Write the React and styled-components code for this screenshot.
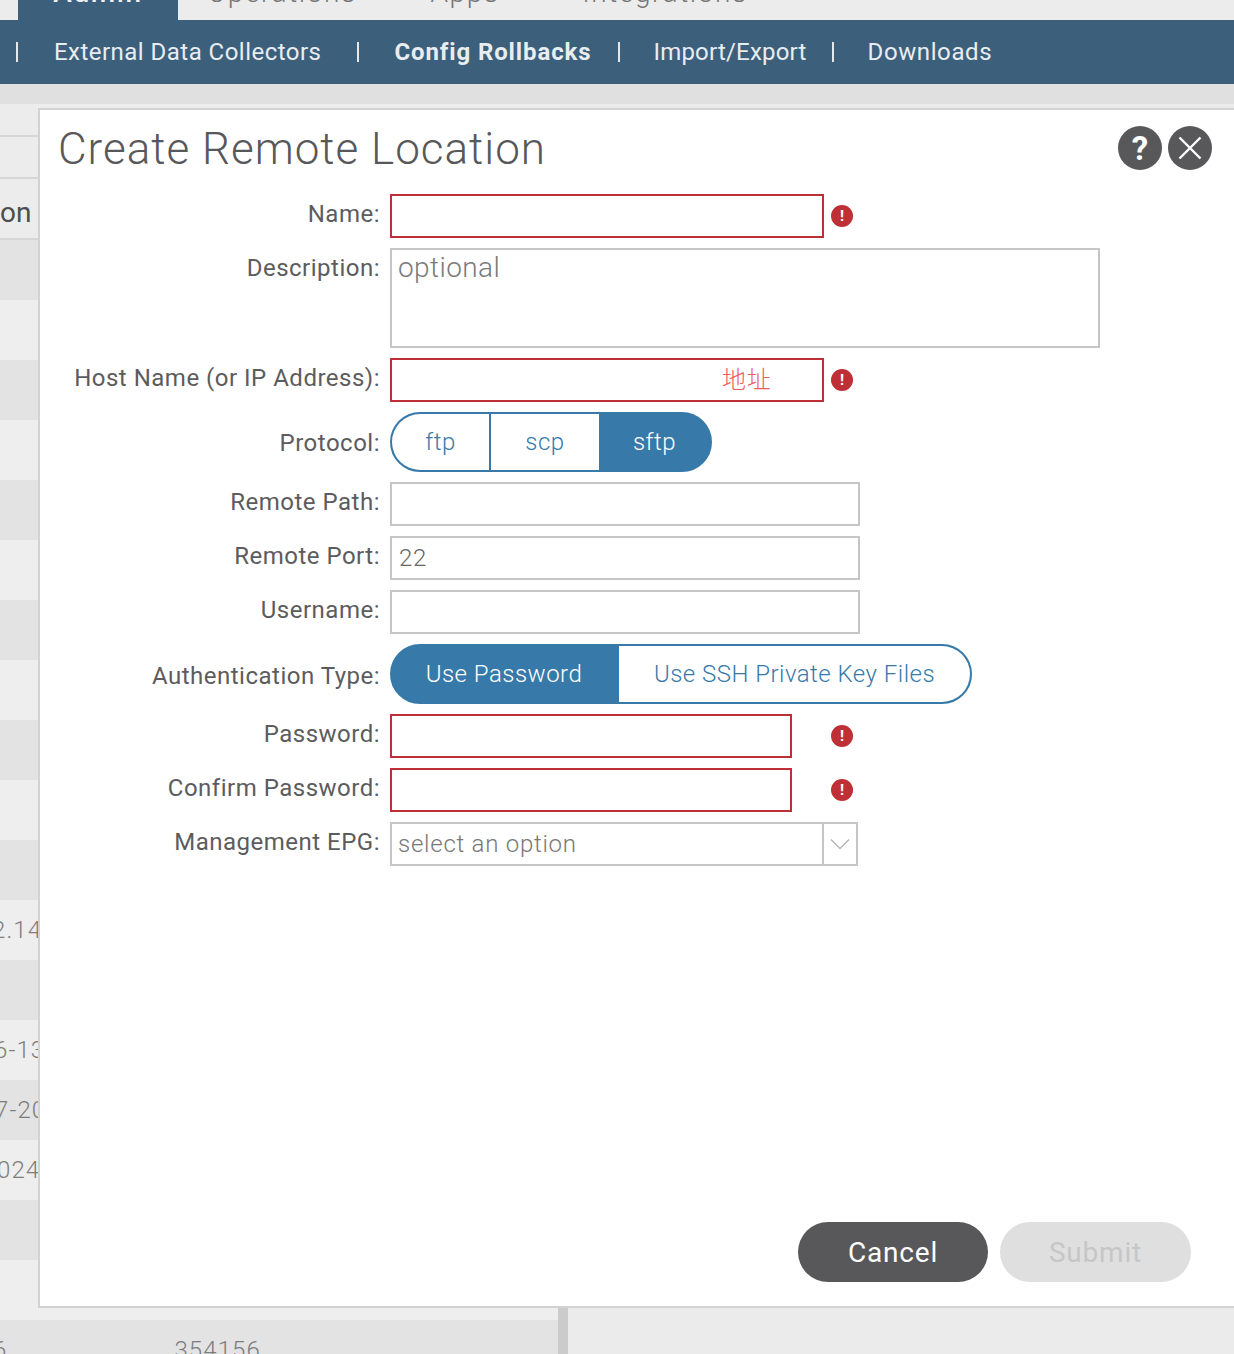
import React from "react";
import styled, { createGlobalStyle } from "styled-components";

const Global = createGlobalStyle`
  html, body { margin: 0; padding: 0; background: #ebebeb; }
  * { box-sizing: border-box; }
  body { font-family: Roboto, "Noto Sans CJK SC", sans-serif; }
`;

const Page = styled.div`
  position: relative;
  width: 1234px;
  height: 1354px;
  overflow: hidden;
  background: #ebebeb;
`;

const TabBar = styled.div`
  height: 20px;
  display: flex;
  align-items: flex-end;
  padding-left: 18px;
  background: #ececec;
  overflow: hidden;
`;
const Tab = styled.div`
  height: 20px;
  width: ${(p) => p.$w}px;
  flex: none;
  display: flex;
  align-items: flex-end;
  justify-content: center;
  background: ${(p) => (p.$active ? "#3c5f7c" : "transparent")};
  color: ${(p) => (p.$active ? "#f0f0f0" : "#757575")};
  font-size: 28px;
  font-weight: ${(p) => (p.$active ? 500 : 300)};
  letter-spacing: 1.6px;
  line-height: 28px;
  white-space: nowrap;
  & > span { display: block; margin-bottom: 13px; }
`;

const Nav = styled.nav`
  height: 64px;
  background: #3c5f7c;
  display: flex;
  align-items: center;
  padding-left: 16px;
  color: #e8edf0;
  font-size: 24px;
`;
const Sep = styled.i`
  display: block;
  width: 2px;
  height: 20px;
  background: #e4e9ed;
  flex: none;
  margin-right: ${(p) => p.$r}px;
`;
const NavItem = styled.a`
  font-weight: ${(p) => (p.$active ? 700 : 400)};
  letter-spacing: ${(p) => p.$ls}px;
  margin-right: ${(p) => p.$r}px;
  white-space: nowrap;
`;

const Band = styled.div`
  height: 20px;
  background: #e0e0e0;
`;

const Body = styled.div`
  display: flex;
  align-items: flex-start;
`;
const Table = styled.div`
  width: 558px;
  flex: none;
  padding-top: 31px;
  background: #ececec;
`;
const Scrollbar = styled.div`
  width: 10px;
  height: 1250px;
  margin-top: 4px;
  flex: none;
  background: #cbcbcb;
`;
const HeadRow = styled.div`
  height: ${(p) => p.$h}px;
  border-top: 2px solid #d6d6d6;
  background: #ececec;
  display: flex;
  align-items: center;
  padding-top: ${(p) => p.$pt || 0}px;
  color: #4d4d4d;
  font-size: 28px;
  font-weight: 400;
`;
const Row = styled.div`
  height: 60px;
  display: flex;
  align-items: center;
  background: ${(p) => (p.$dark ? "#e3e3e3" : "#eeeeee")};
  color: #7d7d7d;
  font-size: 24px;
  font-weight: 300;
  letter-spacing: 1.1px;
  white-space: nowrap;
  overflow: hidden;
`;
const Cell = styled.span`
  display: block;
  flex: none;
  margin-left: ${(p) => p.$x}px;
`;

const Modal = styled.section`
  position: absolute;
  left: 38px;
  top: 108px;
  width: 1240px;
  height: 1200px;
  background: #fff;
  border: 2px solid #d2d2d2;
  display: flex;
  flex-direction: column;
`;
const ModalHead = styled.header`
  display: flex;
  align-items: center;
  height: 76px;
  padding: 0 0 0 18px;
`;
const Title = styled.h1`
  margin: 0;
  padding-top: 2px;
  flex: none;
  width: 1060px;
  color: #58585a;
  font-size: 44px;
  font-weight: 300;
  line-height: 1;
  letter-spacing: 1px;
`;
const RoundBtn = styled.button`
  width: 44px;
  height: 44px;
  padding: 0;
  margin-right: 6px;
  border: 0;
  border-radius: 50%;
  flex: none;
  background: #58585a;
  color: #fff;
  font: 700 33px/1 Roboto, sans-serif;
  display: flex;
  align-items: center;
  justify-content: center;
`;

const Form = styled.form`
  display: flex;
  flex-direction: column;
  gap: 10px;
  padding-top: 8px;
  margin: 0;
`;
const FormRow = styled.div`
  display: flex;
  align-items: flex-start;
  gap: 10px;
`;
const Label = styled.label`
  width: 340px;
  flex: none;
  text-align: right;
  color: #5c5c5e;
  font-size: 24px;
  letter-spacing: 0.5px;
  line-height: 40px;
  padding-top: ${(p) => p.$pad || 0}px;
  white-space: nowrap;
`;
const Input = styled.input`
  display: block;
  width: ${(p) => p.$w}px;
  height: 44px;
  flex: none;
  padding: 0 0 0 ${(p) => p.$pl || 7}px;
  border: 2px solid ${(p) => (p.$error ? "#be3035" : "#c6c6c9")};
  border-radius: 0;
  outline: none;
  background: #fff;
  color: #666;
  font: 300 24px Roboto, "Noto Sans CJK SC", sans-serif;
  letter-spacing: 0.8px;
  &::placeholder { color: #ee5c5c; opacity: 1; }
`;
const Area = styled.textarea`
  display: block;
  width: 710px;
  height: 100px;
  flex: none;
  padding: 2px 6px 0;
  border: 2px solid #c6c6c9;
  border-radius: 0;
  outline: none;
  resize: none;
  font: 300 28px/32px Roboto, sans-serif;
  letter-spacing: 0.4px;
  &::placeholder { color: #7a7a7a; opacity: 1; }
`;
const ErrorIcon = styled.span`
  width: 22px;
  height: 22px;
  flex: none;
  margin-top: 11px;
  margin-left: ${(p) => p.$ml}px;
  border-radius: 50%;
  background: #be3035;
  color: #fff;
  display: flex;
  align-items: center;
  justify-content: center;
  font: 700 15px/1 Roboto, sans-serif;
`;
const Segmented = styled.div`
  display: flex;
  height: 60px;
  width: ${(p) => p.$w}px;
  flex: none;
  border: 2px solid #377aa9;
  border-radius: 30px;
  background: #377aa9;
  overflow: hidden;
`;
const Segment = styled.button`
  width: ${(p) => p.$w}px;
  flex: ${(p) => (p.$w ? "none" : "1")};
  padding: 0 ${(p) => p.$pr || 0}px 0 0;
  border: 0;
  border-right: ${(p) => (p.$divider ? "2px solid #377aa9" : "0")};
  background: ${(p) => (p.$on ? "#377aa9" : "#fff")};
  color: ${(p) => (p.$on ? "#fff" : "#377aa9")};
  font: 300 24px Roboto, sans-serif;
  letter-spacing: 0.48px;
`;
const Select = styled.div`
  width: 468px;
  height: 44px;
  flex: none;
  display: flex;
  align-items: center;
  border: 2px solid #c6c6c9;
  color: #777;
  font-size: 24px;
  font-weight: 300;
  letter-spacing: 0.75px;
`;
const SelectText = styled.span`
  flex: 1;
  padding-left: 6px;
`;
const SelectArrow = styled.span`
  width: 34px;
  height: 100%;
  flex: none;
  border-left: 2px solid #c6c6c9;
  display: flex;
  align-items: center;
  justify-content: center;
`;
const Footer = styled.footer`
  margin-top: auto;
  display: flex;
  gap: 12px;
  padding: 0 0 24px 758px;
`;
const ActionBtn = styled.button`
  width: ${(p) => p.$w}px;
  height: 60px;
  padding: 0;
  border: 0;
  border-radius: 30px;
  background: ${(p) => (p.$off ? "#dfdfdf" : "#58585a")};
  color: ${(p) => (p.$off ? "#c6c6c6" : "#fff")};
  font: 400 28px Roboto, sans-serif;
  letter-spacing: 0.8px;
`;

const rowTexts = {
  11: ["2.14", -8],
  13: ["6-13", -6],
  14: ["7-20", -5],
  15: ["024", -3],
};

const Err = ({ ml }) => <ErrorIcon $ml={ml}>!</ErrorIcon>;

export default function App() {
  return (
    <Page>
      <Global />
      <TabBar>
        <Tab $w={160} $active><span>Admin</span></Tab>
        <Tab $w={208}><span>Operations</span></Tab>
        <Tab $w={158}><span>Apps</span></Tab>
        <Tab $w={242}><span>Integrations</span></Tab>
      </TabBar>
      <Nav>
        <Sep $r={36} />
        <NavItem $r={36} $ls={0.47}>External Data Collectors</NavItem>
        <Sep $r={35} />
        <NavItem $r={27} $ls={0.88} $active>Config Rollbacks</NavItem>
        <Sep $r={33} />
        <NavItem $r={25} $ls={0.2}>Import/Export</NavItem>
        <Sep $r={34} />
        <NavItem $r={0} $ls={0.6}>Downloads</NavItem>
      </Nav>
      <Band />
      <Body>
        <Table>
          <HeadRow $h={42} />
          <HeadRow $h={61} $pt={8}><Cell $x={0}>on</Cell></HeadRow>
          <HeadRow $h={2} />
          {Array.from({ length: 18 }, (_, i) => (
            <Row key={i} $dark={i % 2 === 0}>
              {rowTexts[i] ? <Cell $x={rowTexts[i][1]}>{rowTexts[i][0]}</Cell> : null}
            </Row>
          ))}
          <Row $dark>
            <Cell $x={-7}>6</Cell>
            <Cell $x={167}>354156</Cell>
          </Row>
        </Table>
        <Scrollbar />
      </Body>
      <Modal>
        <ModalHead>
          <Title>Create Remote Location</Title>
          <RoundBtn aria-label="help">?</RoundBtn>
          <RoundBtn aria-label="close">
            <svg width="26" height="26" viewBox="0 0 26 26" fill="none" stroke="#fff" strokeWidth="2.4">
              <path d="M2.5 2.5 23.5 23.5M23.5 2.5 2.5 23.5" />
            </svg>
          </RoundBtn>
        </ModalHead>
        <Form>
          <FormRow>
            <Label>Name:</Label>
            <Input $w={434} $error />
            <Err ml={-3} />
          </FormRow>
          <FormRow>
            <Label>Description:</Label>
            <Area placeholder="optional" />
          </FormRow>
          <FormRow>
            <Label>Host Name (or IP Address):</Label>
            <Input $w={434} $error $pl={330} placeholder="地址" />
            <Err ml={-3} />
          </FormRow>
          <FormRow>
            <Label $pad={11}>Protocol:</Label>
            <Segmented $w={322}>
              <Segment $w={99} $divider>ftp</Segment>
              <Segment $w={108}>scp</Segment>
              <Segment $on>sftp</Segment>
            </Segmented>
          </FormRow>
          <FormRow>
            <Label>Remote Path:</Label>
            <Input $w={470} />
          </FormRow>
          <FormRow>
            <Label>Remote Port:</Label>
            <Input $w={470} defaultValue="22" />
          </FormRow>
          <FormRow>
            <Label>Username:</Label>
            <Input $w={470} />
          </FormRow>
          <FormRow>
            <Label $pad={12}>Authentication Type:</Label>
            <Segmented $w={582}>
              <Segment $w={227} $pr={3} $on>Use Password</Segment>
              <Segment>Use SSH Private Key Files</Segment>
            </Segmented>
          </FormRow>
          <FormRow>
            <Label>Password:</Label>
            <Input $w={402} $error />
            <Err ml={29} />
          </FormRow>
          <FormRow>
            <Label>Confirm Password:</Label>
            <Input $w={402} $error />
            <Err ml={29} />
          </FormRow>
          <FormRow>
            <Label>Management EPG:</Label>
            <Select>
              <SelectText>select an option</SelectText>
              <SelectArrow>
                <svg width="20" height="12" viewBox="0 0 20 12" fill="none" stroke="#b5b5b8" strokeWidth="1.5">
                  <path d="M1 1.5 10 10.5 19 1.5" />
                </svg>
              </SelectArrow>
            </Select>
          </FormRow>
        </Form>
        <Footer>
          <ActionBtn $w={190}>Cancel</ActionBtn>
          <ActionBtn $w={191} $off>Submit</ActionBtn>
        </Footer>
      </Modal>
    </Page>
  );
}
